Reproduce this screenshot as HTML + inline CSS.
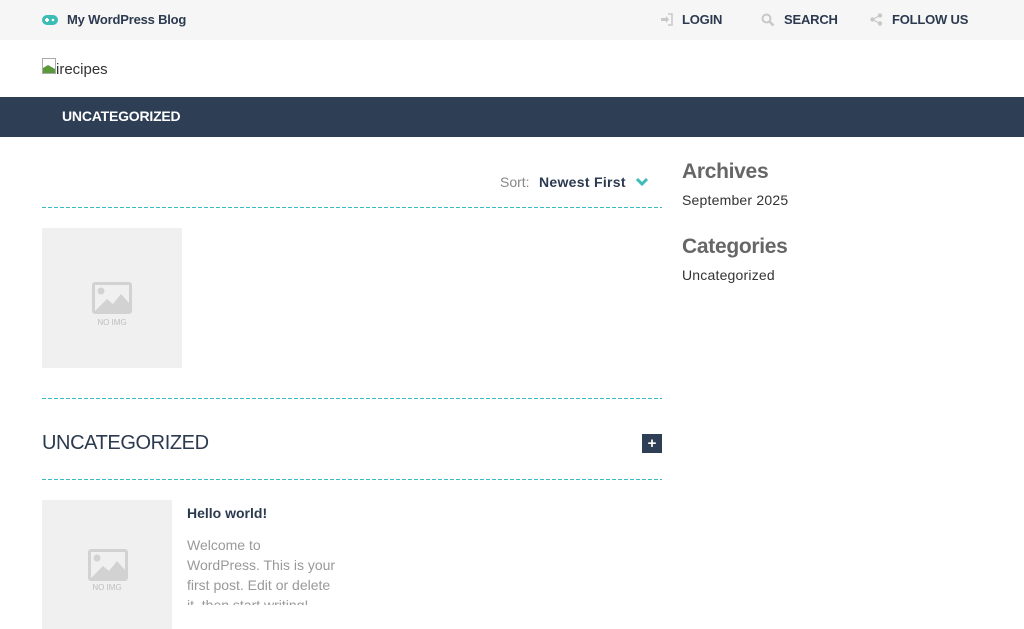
<!DOCTYPE html>
<html><head><meta charset="utf-8"><style>
*{margin:0;padding:0;box-sizing:border-box}
body{width:1024px;height:629px;overflow:hidden;background:#fff;font-family:"Liberation Sans",sans-serif;color:#2c3a50;position:relative}
.abs{position:absolute}
.top{position:absolute;left:0;top:0;width:1024px;height:40px;background:#f6f6f6}
.tl{font-weight:bold;font-size:13px;color:#2c3a50;letter-spacing:-0.2px}
.nav{position:absolute;left:0;top:97px;width:1024px;height:40px;background:#2d3e55}
.dash{position:absolute;left:42px;width:620px;height:1px;background:repeating-linear-gradient(90deg,#3bbcc4 0 4px,transparent 4px 6px)}
.noimg{position:absolute;background:#f0f0f0}
.noimg .ic{position:absolute;width:40px;height:32px;border:3px solid #d2d2d2;border-radius:3px}
.noimg .t{position:absolute;font-size:8px;color:#bdbdbd;width:100%;text-align:center}
h3{font-size:21px;color:#666;font-weight:bold;letter-spacing:-0.3px}
.side{font-size:14px;color:#333}
</style></head><body>
<div class="top"></div>
<svg class="abs" style="left:42px;top:15px" width="16" height="10" viewBox="0 0 16 10"><rect x="0" y="0" width="16" height="10" rx="5" fill="#3bbcb4"/><rect x="3" y="4" width="4" height="2" fill="#fff"/><rect x="4" y="3" width="2" height="4" fill="#fff"/><circle cx="11" cy="5" r="1.3" fill="#fff"/></svg>
<div class="abs tl" style="left:67px;top:12px">My WordPress Blog</div>
<svg class="abs" style="left:660px;top:13px" width="13" height="13" viewBox="0 0 13 13"><path d="M1 5h5V3l3 3.5-3 3.5V8H1z" fill="#c8c8c8"/><path d="M8 1h4v11H8" stroke="#c8c8c8" stroke-width="1.5" fill="none"/></svg>
<div class="abs tl" style="left:682px;top:12px">LOGIN</div>
<svg class="abs" style="left:761px;top:13px" width="14" height="14" viewBox="0 0 14 14"><circle cx="5.5" cy="5.5" r="4" stroke="#c8c8c8" stroke-width="2" fill="none"/><path d="M8.5 8.5l4 4" stroke="#c8c8c8" stroke-width="2.5"/></svg>
<div class="abs tl" style="left:784px;top:12px">SEARCH</div>
<svg class="abs" style="left:870px;top:13px" width="13" height="13" viewBox="0 0 13 13"><circle cx="10" cy="2.5" r="2.2" fill="#c8c8c8"/><circle cx="2.5" cy="6.5" r="2.2" fill="#c8c8c8"/><circle cx="10" cy="10.5" r="2.2" fill="#c8c8c8"/><path d="M10 2.5L2.5 6.5 10 10.5" stroke="#c8c8c8" stroke-width="1.2" fill="none"/></svg>
<div class="abs tl" style="left:892px;top:12px">FOLLOW US</div>
<svg class="abs" style="left:42px;top:58px" width="14" height="16" viewBox="0 0 14 16"><rect x="0.5" y="0.5" width="13" height="15" fill="#fff" stroke="#aaa"/><path d="M1 15L1 10 6 7 13 11 13 15z" fill="#5a9a3a"/></svg>
<div class="abs" style="left:56px;top:61px;font-size:15px;color:#333">irecipes</div>
<div class="nav"></div>
<div class="abs" style="left:62px;top:108px;font-size:14px;font-weight:bold;color:#fff;letter-spacing:-0.2px">UNCATEGORIZED</div>
<div class="abs" style="left:500px;top:174px;font-size:14px;color:#888">Sort:</div>
<div class="abs" style="left:539px;top:174px;font-size:14px;font-weight:bold;color:#2c3a50;letter-spacing:0.3px">Newest First</div>
<svg class="abs" style="left:635px;top:177px" width="14" height="10" viewBox="0 0 14 10"><path d="M2 2l5 5 5-5" stroke="#3bbcb4" stroke-width="3" fill="none"/></svg>
<div class="dash" style="top:207px"></div>
<div class="noimg" style="left:42px;top:228px;width:140px;height:140px"><div class="ic" style="left:50px;top:54px"></div><svg class="abs" style="left:53px;top:57px" width="34" height="26"><circle cx="6" cy="6" r="3.5" fill="#d2d2d2"/><path d="M0 26L12 14 18 19 26 9 34 18 34 26z" fill="#d2d2d2"/></svg><div class="t" style="top:90px">NO IMG</div></div>
<div class="dash" style="top:398px"></div>
<div class="abs" style="left:42px;top:432px;font-size:20px;color:#2c3a50;letter-spacing:-0.4px">UNCATEGORIZED</div>
<div class="abs" style="left:642px;top:434px;width:20px;height:19px;background:#2d3e55;color:#fff;font-weight:bold;font-size:15px;line-height:19px;text-align:center">+</div>
<div class="dash" style="top:479px"></div>
<div class="noimg" style="left:42px;top:500px;width:130px;height:129px"><div class="ic" style="left:46px;top:49px;width:40px;height:32px"></div><svg class="abs" style="left:49px;top:52px" width="34" height="26"><circle cx="6" cy="6" r="3.5" fill="#d2d2d2"/><path d="M0 26L12 14 18 19 26 9 34 18 34 26z" fill="#d2d2d2"/></svg><div class="t" style="top:83px">NO IMG</div></div>
<div class="abs" style="left:187px;top:505px;font-size:14px;font-weight:bold;color:#2c3a50">Hello world!</div>
<div class="abs" style="left:187px;top:535px;width:175px;height:70px;overflow:hidden;font-size:14px;line-height:20px;color:#999;white-space:nowrap">Welcome to<br>WordPress. This is your<br>first post. Edit or delete<br>it, then start writing!</div>
<h3 class="abs" style="left:682px;top:160px">Archives</h3>
<div class="abs side" style="left:682px;top:192px;letter-spacing:0.2px">September 2025</div>
<h3 class="abs" style="left:682px;top:235px">Categories</h3>
<div class="abs side" style="left:682px;top:267px;letter-spacing:0.2px">Uncategorized</div>
</body></html>
